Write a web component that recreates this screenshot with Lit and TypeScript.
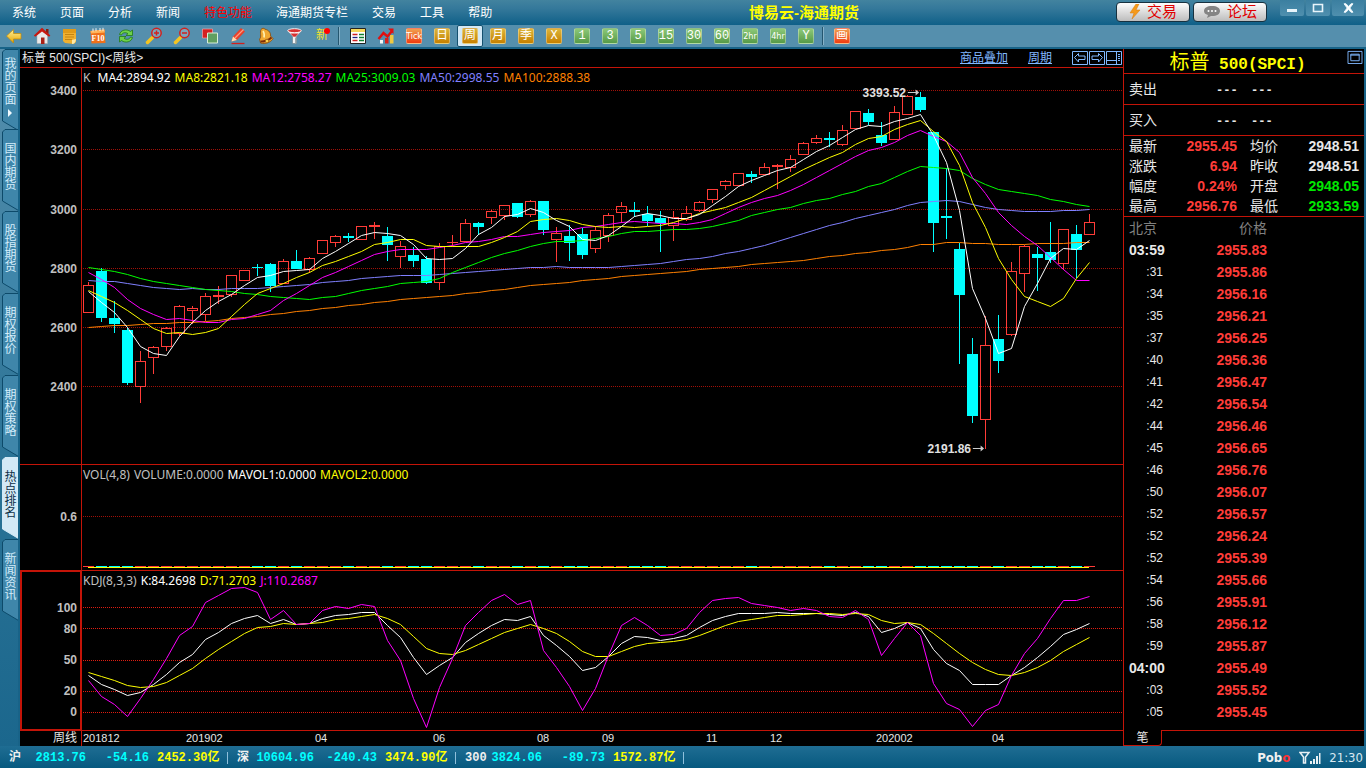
import { LitElement, html, svg, css, nothing } from "lit";
import type { TemplateResult } from "lit";
import { customElement, property } from "lit/decorators.js";
import { classMap } from "lit/directives/class-map.js";

/* ---------- data ---------- */

// [direction, body top, body bottom, high, low] in drawing units of the price pane
type Candle = [string, number, number, number, number];
const candles: Candle[] = [
  ["u", 285, 313, 282, 313], ["d", 271, 318, 268, 322], ["d", 318, 324, 301, 333], ["d", 330, 383, 328, 385],
  ["u", 361, 387, 351, 403], ["u", 347, 358, 346, 374], ["u", 328, 347, 327, 351], ["u", 306, 334, 305, 336],
  ["u", 308, 311, 306, 324], ["u", 296, 315, 293, 321], ["u", 295, 297, 286, 304], ["u", 275, 295, 275, 297],
  ["u", 270, 281, 270, 281], ["d", 267, 268, 264, 276], ["d", 264, 286, 263, 292], ["u", 261, 284, 259, 284],
  ["d", 261, 269, 250, 269], ["u", 258, 270, 257, 273], ["u", 240, 254, 240, 254], ["u", 236, 243, 235, 247],
  ["d", 236, 238, 233, 242], ["u", 226, 240, 226, 240], ["u", 225, 227, 222, 239], ["d", 236, 245, 227, 261],
  ["u", 246, 257, 241, 268], ["d", 255, 261, 247, 267], ["d", 259, 283, 256, 284], ["u", 246, 283, 243, 290],
  ["u", 242, 243, 235, 247], ["u", 223, 242, 219, 242], ["d", 223, 227, 222, 235], ["u", 211, 218, 210, 224],
  ["u", 205, 216, 205, 220], ["d", 203, 217, 203, 218], ["u", 201, 215, 200, 217], ["d", 201, 230, 201, 235],
  ["u", 233, 240, 227, 262], ["d", 236, 243, 225, 261], ["d", 234, 255, 228, 259], ["u", 230, 249, 226, 253],
  ["u", 215, 236, 213, 242], ["u", 206, 213, 202, 223], ["d", 210, 212, 202, 217], ["d", 214, 221, 206, 226],
  ["d", 218, 223, 211, 252], ["u", 217, 226, 211, 241], ["u", 213, 220, 206, 221], ["u", 202, 211, 201, 212],
  ["u", 189, 200, 189, 203], ["u", 181, 186, 180, 190], ["u", 173, 186, 173, 186], ["d", 174, 177, 171, 183],
  ["u", 167, 175, 163, 175], ["u", 165, 167, 164, 189], ["u", 159, 168, 155, 172], ["u", 143, 155, 142, 155],
  ["u", 138, 143, 135, 144], ["d", 138, 140, 132, 147], ["u", 130, 145, 125, 146], ["u", 111, 129, 111, 129],
  ["d", 113, 122, 109, 125], ["d", 135, 143, 122, 146], ["u", 112, 140, 106, 140], ["u", 96, 115, 95, 115],
  ["d", 97, 110, 92, 112], ["d", 132, 223, 132, 252], ["d", 216, 218, 168, 239], ["d", 249, 295, 243, 364],
  ["d", 354, 416, 338, 423], ["u", 345, 420, 316, 449], ["d", 339, 361, 315, 373], ["u", 271, 335, 262, 336],
  ["u", 246, 274, 245, 292], ["d", 254, 258, 247, 291], ["d", 252, 260, 222, 263], ["u", 229, 264, 229, 270],
  ["d", 234, 250, 225, 278], ["u", 222, 235, 214, 235],
];

const ma4 = [291, 302, 312, 327, 346, 353, 355, 336, 322, 310, 301, 294, 285, 277, 275, 271, 270, 269, 258, 251, 243, 235, 232, 233, 235, 244, 258, 259, 258, 248, 234, 227, 216, 214, 208, 212, 220, 226, 239, 240, 235, 226, 216, 213, 215, 218, 218, 214, 205, 196, 186, 180, 175, 170, 167, 159, 151, 145, 137, 129, 125, 126, 121, 118, 114, 135, 162, 210, 288, 318, 353, 348, 306, 283, 258, 248, 249, 240];
const ma8 = [290, 296, 302, 310, 319, 328, 333, 332, 334, 332, 328, 316, 304, 293, 288, 283, 277, 272, 265, 261, 256, 251, 244, 242, 239, 239, 245, 246, 246, 246, 246, 242, 237, 231, 221, 219, 218, 220, 224, 226, 227, 226, 227, 226, 225, 222, 218, 213, 210, 207, 202, 197, 190, 183, 176, 169, 163, 157, 152, 144, 138, 136, 129, 124, 120, 131, 141, 165, 202, 227, 258, 279, 296, 301, 306, 298, 278, 262];
const ma12 = [272, 279, 287, 299, 308, 314, 319, 318, 320, 322, 322, 319, 318, 314, 310, 300, 293, 285, 277, 272, 266, 260, 254, 251, 249, 249, 249, 247, 245, 242, 241, 239, 236, 236, 234, 232, 231, 230, 227, 226, 224, 222, 221, 222, 223, 223, 224, 222, 219, 213, 207, 202, 198, 195, 190, 184, 177, 170, 163, 156, 150, 147, 142, 135, 130, 136, 141, 152, 177, 193, 212, 225, 236, 245, 257, 269, 280, 280];
const ma25 = [267, 269, 271, 274, 278, 281, 283, 285, 287, 289, 290, 291, 293, 294, 296, 297, 298, 299, 297, 296, 293, 290, 288, 286, 283, 282, 281, 278, 272, 267, 262, 257, 253, 250, 246, 243, 241, 241, 240, 238, 236, 233, 231, 231, 230, 229, 229, 228, 226, 223, 220, 215, 212, 209, 207, 203, 200, 198, 194, 191, 186, 183, 177, 171, 166, 167, 168, 170, 178, 184, 189, 191, 193, 195, 199, 201, 204, 206];
const ma50 = [280, 281, 281, 283, 285, 287, 288, 289, 288, 289, 289, 288, 288, 288, 287, 286, 285, 284, 282, 281, 280, 278, 277, 276, 275, 275, 275, 274, 273, 272, 271, 270, 269, 268, 267, 267, 266, 267, 267, 267, 267, 266, 265, 264, 263, 261, 259, 258, 256, 253, 251, 248, 245, 241, 237, 233, 229, 225, 222, 218, 215, 212, 209, 205, 202, 201, 200, 201, 204, 207, 209, 210, 211, 211, 211, 210, 210, 209];
const ma100 = [327, 326, 325, 325, 324, 323, 323, 322, 322, 321, 320, 318, 317, 316, 314, 313, 311, 310, 308, 307, 305, 304, 302, 301, 299, 298, 297, 296, 295, 293, 292, 290, 289, 287, 285, 284, 283, 282, 280, 279, 278, 276, 275, 274, 273, 272, 271, 269, 268, 267, 266, 264, 263, 262, 261, 260, 258, 256, 255, 253, 252, 250, 249, 247, 244, 244, 242, 242, 243, 243, 244, 244, 244, 243, 243, 243, 242, 242];
const kLine = [675, 684, 689, 695, 692, 684, 674, 662, 654, 639, 632, 623, 618, 615, 623, 619, 624, 623, 618, 615, 614, 612, 612, 625, 637, 657, 674, 665, 657, 642, 633, 625, 619, 620, 616, 635, 645, 656, 670, 667, 656, 643, 636, 637, 640, 638, 635, 627, 620, 616, 613, 613, 613, 612, 613, 613, 613, 614, 615, 612, 616, 632, 628, 622, 628, 649, 663, 670, 684, 684, 684, 675, 667, 657, 646, 634, 629, 623];
const dLine = [672, 676, 680, 685, 687, 686, 682, 675, 668, 658, 649, 641, 633, 627, 626, 623, 624, 623, 622, 619, 618, 616, 614, 618, 624, 636, 648, 653, 654, 650, 644, 638, 632, 628, 624, 628, 633, 641, 651, 656, 656, 651, 646, 643, 642, 641, 639, 635, 630, 625, 621, 619, 617, 615, 615, 614, 613, 613, 614, 613, 614, 620, 623, 622, 624, 633, 643, 653, 662, 669, 674, 675, 672, 667, 660, 651, 644, 637];
const jLine = [680, 696, 704, 716, 698, 679, 658, 635, 626, 602, 595, 588, 587, 592, 619, 610, 624, 623, 610, 606, 608, 604, 606, 640, 660, 698, 727, 687, 658, 625, 612, 600, 594, 604, 600, 650, 667, 686, 710, 688, 655, 625, 617, 625, 635, 634, 628, 612, 600, 598, 597, 603, 605, 607, 610, 608, 610, 616, 617, 610, 619, 655, 638, 622, 635, 683, 703, 709, 726, 710, 704, 675, 653, 638, 618, 600, 600, 596];

const STEP = 13;
const WIDTH = 1041;
const cx = (i: number) => 6 + i * STEP;
const points = (ys: number[]) => ys.map((y, i) => `${cx(i) + 0.5},${y + 0.5}`).join(" ");

interface Tick { y: number; text: string }
interface Pane { top: number; height: number; ticks: Tick[] }
const pricePane: Pane = { top: 68, height: 396, ticks: [
  { y: 90, text: "3400" }, { y: 149, text: "3200" }, { y: 209, text: "3000" },
  { y: 268, text: "2800" }, { y: 327, text: "2600" }, { y: 386, text: "2400" }] };
const volPane: Pane = { top: 465, height: 105, ticks: [{ y: 516, text: "0.6" }] };
const kdjPane: Pane = { top: 571, height: 159, ticks: [
  { y: 607, text: "100" }, { y: 628, text: "80" }, { y: 660, text: "50" }, { y: 691, text: "20" }, { y: 712, text: "0" }] };

const months: [number, string][] = [[1, "201812"], [104, "201902"], [233, "04"], [351, "06"], [455, "08"],
  [520, "09"], [624, "11"], [688, "12"], [794, "202002"], [910, "04"]];

const ticks: [string, string][] = [
  ["03:59", "2955.83"], [":31", "2955.86"], [":34", "2956.16"], [":35", "2956.21"], [":37", "2956.25"],
  [":40", "2956.36"], [":41", "2956.47"], [":42", "2956.54"], [":44", "2956.46"], [":45", "2956.65"],
  [":46", "2956.76"], [":50", "2956.07"], [":52", "2956.57"], [":52", "2956.24"], [":52", "2955.39"],
  [":54", "2955.66"], [":56", "2955.91"], [":58", "2956.12"], [":59", "2955.87"], ["04:00", "2955.49"],
  [":03", "2955.52"], [":05", "2955.45"]];

/* ---------- shared styles ---------- */

const base = css`
  * { box-sizing: border-box; }
  button { appearance: none; border: 0; margin: 0; padding: 0; background: none; color: inherit; font: inherit; cursor: pointer; }
  a { color: inherit; text-decoration: none; }
  svg { display: block; }
`;

/* ---------- title bar ---------- */

@customElement("title-bar")
class TitleBar extends LitElement {
  static styles = [base, css`
    :host { display: flex; height: 25px; background: linear-gradient(#42839f, #34789a 35%, #0f6088);
      font: 12px/24px "Liberation Sans", "Noto Sans CJK SC", sans-serif; color: #fff; }
    .menu { display: flex; gap: 24px; padding: 1px 0 0 12px; }
    .hot { color: #f00; }
    .title { flex: 1; margin: 0; text-align: center; font: bold 15px/25px "Liberation Sans", "Noto Sans CJK SC", sans-serif; color: #ff0; }
    .actions { display: flex; gap: 3px; padding: 2px 13px 0 0; }
    .action { display: flex; align-items: center; justify-content: center; gap: 6px; width: 74px; height: 20px;
      border: 1px solid #17313f; border-radius: 4px; background: linear-gradient(#fdfdfd, #dcdcdc 50%, #bdbdbd);
      color: #e00000; font: 15px/18px "Liberation Sans", "Noto Sans CJK SC", sans-serif; }
    .window { display: flex; gap: 2px; padding-right: 2px; }
    .win { width: 24px; height: 16px; background: linear-gradient(#3b7fa0, #4f8fae); border-radius: 0 0 2px 2px; display: grid; place-items: center; }
    .close { width: 32px; }
  `];
  render() {
    const items = ["系统", "页面", "分析", "新闻", "特色功能", "海通期货专栏", "交易", "工具", "帮助"];
    return html`
      <nav class="menu">${items.map((t) => html`<button class=${t === "特色功能" ? "hot" : ""}>${t}</button>`)}</nav>
      <h1 class="title">博易云-海通期货</h1>
      <div class="actions">
        <button class="action">
          <svg width="12" height="16" viewBox="0 0 12 16"><path d="M7 0 1 9h4l-2 6 8-9H7l3-6z" fill="#f59a1b" stroke="#d9780a" stroke-width=".5"/></svg>交易</button>
        <button class="action">
          <svg width="18" height="14" viewBox="0 0 18 14"><path d="M9 1c5 0 8 2 8 5s-3 5-8 5l-1 0-4 2 1-3C2 9 1 8 1 6c0-3 3-5 8-5z" fill="#848484"/><g fill="#fff"><circle cx="5.5" cy="6" r="1"/><circle cx="9" cy="6" r="1"/><circle cx="12.5" cy="6" r="1"/></g></svg>论坛</button>
      </div>
      <div class="window">
        <button class="win" aria-label="最小化"><svg width="12" height="12" viewBox="0 0 12 12"><path d="M1 7h10v3H1z" fill="#e8f4fa"/></svg></button>
        <button class="win" aria-label="最大化"><svg width="12" height="10" viewBox="0 0 12 10"><path d="M1.5 1.5h9v7h-9z" fill="none" stroke="#e8f4fa" stroke-width="1.6"/></svg></button>
        <button class="win close" aria-label="关闭"><svg width="11" height="10" viewBox="0 0 11 10"><path d="M1 .8h2L5.500 3.500 8 .8h2L6.800 5 10 9.200H8L5.500 6.500 3 9.200H1L4.200 5z" fill="#fff" stroke="#e8f4fa"/></svg></button>
      </div>`;
  }
}

/* ---------- tool bar ---------- */

const icon = (body: TemplateResult) => html`<svg width="18" height="18" viewBox="0 0 18 18">${body}</svg>`;
const toolIcons: [string, TemplateResult][] = [
  ["后退", svg`<defs><linearGradient id="gold" x2="0" y2="1"><stop stop-color="#fff29a"/><stop offset="1" stop-color="#e8a400"/></linearGradient></defs>
    <path d="M1.500 9 8.500 2.500v4H16v5.500H8.500v4z" fill="url(#gold)" stroke="#c78a00" stroke-width=".7"/>`],
  ["首页", svg`<path d="M4 8v8.500h10.500V8L9 3z" fill="#e9e9e9" stroke="#a9a9a9" stroke-width=".5"/><path d="M13 2h2.500v5L13 5z" fill="#8a1c10"/><path d="M.8 8.500 9 .8l8.400 7.700-1.400 1.200L9 4.500 2.200 9.800z" fill="#c81810"/><path d="M8 10.500h3.500v6.500H8z" fill="#a82016"/>`],
  ["便签", svg`<path d="M2 2h13v13l-2 2-9-1-2-2z" fill="#f0b030"/><path d="M2 2h13v4H2z" fill="#e09a18"/><path d="M4 7.500h9M4 10h9M4 12.500h7" stroke="#c48410"/><path d="m15 12-4 1 0 4c2 0 4-2 4-5z" fill="#ffe9a8"/>`],
  ["资料", svg`<path d="M1.500 4 15.500 2.500l1 13.500-14 .5z" fill="#f0701a"/><path d="M1.500 4 15.500 2.500l.3 3L2 6.500z" fill="#ffb45a"/><path d="M4 1.500v3M7 1.200v3M11 1v3M14 .8v3" stroke="#fff" stroke-width=".9"/><text x="9" y="13.500" text-anchor="middle" font-size="8" font-weight="bold" font-family="Liberation Serif, serif" fill="#fff">F10</text>`],
  ["刷新", svg`<path d="M2.500 7.500C3.500 3 9.500 1.500 13.500 4.500L15.500 3v5.500H9l2-1.800C8.500 5 5.500 5.500 4.500 8z" fill="#6ed04a" stroke="#1f7a14" stroke-width=".8"/><path d="M15.500 10.500c-1 4.500-7 6-11 3L2.500 15V9.500H9l-2 1.800c2.500 1.700 5.500 1.200 6.500-1.300z" fill="#6ed04a" stroke="#1f7a14" stroke-width=".8"/>`],
  ["放大", svg`<path d="m2.500 15.500 5-5" stroke="#f5c521" stroke-width="3.500" stroke-linecap="round"/><circle cx="11.500" cy="6" r="4.700" fill="#7ba6bb" stroke="#d3201c" stroke-width="1.500"/><path d="M9 6h5M11.500 3.500v5" stroke="#d3201c" stroke-width="1.500"/>`],
  ["缩小", svg`<path d="m2.500 15.500 5-5" stroke="#f5c521" stroke-width="3.500" stroke-linecap="round"/><circle cx="11.500" cy="6" r="4.700" fill="#7ba6bb" stroke="#d3201c" stroke-width="1.500"/><path d="M9 6h5" stroke="#d3201c" stroke-width="1.500"/>`],
  ["叠加", svg`<path d="M1.500 2h10v9h-10z" fill="#d42020" stroke="#f3a0a0" stroke-width=".7"/><path d="M6.500 6h10v10h-10z" fill="#5f9f60" stroke="#d8eed8"/>`],
  ["画线", svg`<path d="m2.500 14.500 1.500-5L12 1l4 3.500-8 8.500z" fill="#e8402a"/><path d="m6 11 8.500-8.500" stroke="#ff9a80" stroke-width="1.200"/><path d="m2.500 14.500 1.500-5 4 3.500z" fill="#ffe0b0"/><path d="M2.500 16.500h13" stroke="#d3201c" stroke-width="1.300"/>`],
  ["预警", svg`<path d="M4 2.500C5 1 7 .8 8 2.200c4 .8 6 4 5.500 6.800l2.500 2.500c-1 3-8 6.500-12.500 4.500L2.500 12C5 10 2.500 6 4 2.500z" fill="#f0a832" stroke="#8a4a08" stroke-width=".8"/><path d="M3.500 14.500c3 .5 8-1 11-4" stroke="#7a2c08" stroke-width="2" fill="none"/><circle cx="10" cy="14" r="1.800" fill="#ffd34d" stroke="#8a4a08" stroke-width=".6"/><path d="M6 4c1.500 2 1.500 4 1 6.500" stroke="#fff0b0" stroke-width="1.600" fill="none"/>`],
  ["筛选", svg`<path d="M2.500 4 7.500 9.500V16.500h4V9.500L16.500 4z" fill="#f2f2f2" stroke="#6a7a84" stroke-width=".6"/><ellipse cx="9.500" cy="3.700" rx="6.800" ry="2" fill="#d83030" stroke="#fff" stroke-width=".9"/><path d="m5.500 6.500 3 3.200h2L13.500 6.500z" fill="#d83030"/><path d="M10.500 10.500v6" stroke="#9aa" stroke-width="1"/>`],
];

@customElement("tool-bar")
class ToolBar extends LitElement {
  static styles = [base, css`
    :host { display: flex; height: 22px; background: #558fad; font: 12px/16px "Liberation Mono", "Noto Sans CJK SC", monospace; color: #fff; }
    .cell { display: grid; place-items: center; width: 28px; height: 22px; }
    .new { color: #f4e32a; position: relative; line-height: 22px; }
    .dot { position: absolute; top: 3px; right: 6px; width: 6px; height: 6px; border-radius: 50%; background: #f00; }
    .sep { width: 2px; height: 18px; margin: 2px 4px 0 2px; border-left: 1px solid #24566f; border-right: 1px solid #86b2c8; }
    .chip { width: 16px; height: 16px; border-radius: 2px; border: 1px solid #ffffff55; line-height: 14px; text-align: center; display: flex; justify-content: center; }
    .gold { background: linear-gradient(#dcb53a, #c68000); }
    .green { background: linear-gradient(#8cc878, #569a48); }
    .red { background: linear-gradient(#f0a050, #f03c10); }
    .tiny { font: 9px/14px "DejaVu Sans Condensed", sans-serif; }
    .on { width: 26px; margin: 0 1px; border: 1px solid #14506e; border-radius: 2px; background: #d3e9f6; }
  `];
  chip(text: string, tone: string) {
    return html`<button class=${classMap({ cell: true, on: text === "周" })}><span class=${classMap({ chip: true, [tone]: true, tiny: text.length > 2 })}>${text}</span></button>`;
  }
  render() {
    return html`
      ${toolIcons.map(([label, body]) => html`<button class="cell" aria-label=${label}>${icon(body)}</button>`)}
      <button class="cell new">新<span class="dot"></span></button>
      <span class="sep"></span>
      <button class="cell" aria-label="报价">${icon(svg`<path d="M1.500 1.500h15v15h-15z" fill="#fff" stroke="#222"/><path d="M2 2h14v3H2z" fill="#f5d75a"/><path d="M3.500 7.500h5M3.500 13.500h5" stroke="#d02020" stroke-width="1.300"/><path d="M3.500 10.500h5" stroke="#202080" stroke-width="1.300"/><path d="M10 7.500h5M10 10.500h5M10 13.500h5" stroke="#108030" stroke-width="1.300"/>`)}</button>
      <button class="cell" aria-label="走势">${icon(svg`<path d="M3 13h3v3.500H3z" fill="#f4f4f4"/><path d="M8 11h3.500v5.500H8z" fill="#d82018"/><path d="M13 8h3.500v8.500H13z" fill="#f0c840"/><path d="m1.500 12 5-6 4 3.500L15 4" stroke="#e01010" stroke-width="2.400" fill="none"/><path d="M11 1.500h5.500V7z" fill="#e01010"/>`)}</button>
      ${this.chip("Tick", "red")}
      ${["日", "周", "月", "季", "X"].map((t) => this.chip(t, "gold"))}
      ${["1", "3", "5", "15", "30", "60", "2hr", "4hr", "Y"].map((t) => this.chip(t, "green"))}
      <span class="sep"></span>
      ${this.chip("画", "red")}`;
  }
}

/* ---------- page tabs on the left ---------- */

@customElement("page-tabs")
class PageTabs extends LitElement {
  static styles = [base, css`
    :host { display: block; background: linear-gradient(#5690ae, #2b7396 60%, #1b678d); border-right: 2px solid #186388; padding-left: 2px;
      font: 12px/16px "Noto Sans CJK SC", sans-serif; color: #d4edfb; }
    .tab { display: grid; width: 16px; height: 82px; }
    .first { height: 80px; }
    .shape { grid-area: 1 / 1; width: 16px; height: 82px; }
    .face { fill: #3f86aa; stroke: #0d4a6a; }
    .label { grid-area: 1 / 1; padding-top: 13px; writing-mode: vertical-rl; line-height: 16px; text-align: left; z-index: 1; }
    .first .label { padding-top: 8px; }
    .arrow { display: inline-block; margin-top: 4px; }
    .on .face { fill: #d3e9f6; stroke: #d3e9f6; }
    .on { color: #0d3048; }
  `];
  render() {
    const names = ["我的页面", "国内期货", "股指期货", "期权报价", "期权策略", "热点排名", "新闻资讯"];
    return html`${names.map((n, i) => html`
      <button class=${classMap({ tab: true, first: i === 0, on: n === "热点排名" })}>
        <svg class="shape" viewBox="0 0 16 82"><path class="face" d="M16.500.5H3L.5 3v69l16 9.500z"/></svg>
        <span class="label">${n}${i === 0 ? html`<svg class="arrow" width="6" height="8" viewBox="0 0 6 8"><path d="M1 0v8l4-4z" fill="#f0faff"/></svg>` : nothing}</span>
      </button>`)}`;
  }
}

/* ---------- chart ---------- */

@customElement("chart-pane")
class ChartPane extends LitElement {
  @property({ attribute: false }) pane: Pane = pricePane;
  @property({ type: Boolean, reflect: true }) selected = false;
  @property({ attribute: false }) plot: unknown = nothing;
  @property({ attribute: false }) legend: [string, string][] = [];
  @property({ type: Boolean, reflect: true }) bright = false;

  static styles = [base, css`
    :host { display: grid; grid-template-columns: 62px minmax(0, 1fr); min-height: 0; border-bottom: 1px solid #c41408; }
    .axis { position: relative; border-right: 1px solid #c41408; font: bold 12px/16px "Liberation Sans", sans-serif; color: #c0c0c0; }
    :host([selected]) .axis { border: 2px solid #c41408; margin: -1px 0; }
    .tick { position: absolute; right: 4px; transform: translateY(-50%); }
    :host([selected]) .tick { right: 3px; }
    .plot { display: grid; min-height: 0; min-width: 0; }
    .canvas { grid-area: 1 / 1; width: 100%; height: 100%; min-height: 0; position: relative; }
    .drawing { position: absolute; inset: 0; width: 100%; height: 100%; }
    .legend { grid-area: 1 / 1; z-index: 1; display: flex; gap: 4px; align-self: start; padding: 1px 0 0 1px; white-space: nowrap;
      font: 12px/17px "Noto Sans", sans-serif; }
    .grid { stroke: #a01008; stroke-dasharray: 1 1; shape-rendering: crispEdges; }
    :host([bright]) .grid { stroke: #e01c10; }
    .up { fill: none; stroke: #ff3c38; }
    .upf { fill: #ff3c38; }
    .dn { fill: #0ff; }
    .crisp { shape-rendering: crispEdges; }
    .line { fill: none; stroke-width: 1; }
    .note { position: absolute; display: flex; align-items: center; gap: 2px; transform: translate(-100%, -50%); font: bold 12px/16px "Liberation Sans", sans-serif; color: #e0e0e0; }
  `];
  render() {
    const { top, height, ticks: marks } = this.pane;
    const pct = (y: number) => `${((y + 0.5 - top) / height) * 100}%`;
    return html`
      <div class="axis">${marks.map((m) => html`<span class="tick" style="top:${pct(m.y)}">${m.text}</span>`)}</div>
      <div class="plot">
        <div class="canvas">
          <svg class="drawing" viewBox="0 ${top} ${WIDTH} ${height}" preserveAspectRatio="none">
            ${marks.map((m) => svg`<line class="grid" x1="1" x2=${WIDTH} y1=${m.y + 0.5} y2=${m.y + 0.5}/>`)}
            ${this.plot}
          </svg>
          ${this.pane === pricePane ? [["3393.52", 838, 92], ["2191.86", 903, 448]].map(([t, x, y]) => html`
            <span class="note" style="left:${(Number(x) / WIDTH) * 100}%;top:${pct(Number(y))}">${t}<svg width="12" height="7" viewBox="0 0 12 7"><path d="M0 3.500h10" stroke="#ccc"/><path d="M8 .5 11.500 3.500 8 6.500z" fill="#ccc"/></svg></span>`) : nothing}
        </div>
        <div class="legend">${this.legend.map(([t, c]) => html`<span style="color:${c}">${t}</span>`)}</div>
      </div>`;
  }
}

const line = (ys: number[], color: string) => svg`<polyline class="line" points=${points(ys)} stroke=${color}/>`;

const candle = ([dir, top, bottom, high, low]: Candle, i: number) => {
  const x = cx(i);
  const fill = dir === "u" ? "upf" : "dn";
  const hollow = dir === "u" && bottom - top > 2;
  return svg`<g class="crisp">
    ${high < top ? svg`<rect class=${fill} x=${x} y=${high} width="1" height=${top - high}/>` : nothing}
    ${low > bottom ? svg`<rect class=${fill} x=${x} y=${bottom} width="1" height=${low - bottom}/>` : nothing}
    ${hollow
      ? svg`<rect class="up" x=${x - 4.5} y=${top + 0.5} width="10" height=${bottom - top - 1}/>`
      : svg`<rect class=${fill} x=${x - 5} y=${top} width="11" height=${bottom - top}/>`}
  </g>`;
};

@customElement("chart-area")
class ChartArea extends LitElement {
  static styles = [base, css`
    :host { display: grid; grid-template-rows: 19px 397fr 106fr 160fr 15px; min-height: 0; background: #000; border-right: 1px solid #c41408;
      font: 11px/18px "Liberation Sans", "Noto Sans CJK SC", sans-serif; color: #e8e8e8; }
    .head { display: flex; align-items: center; border-bottom: 1px solid #c41408; padding-left: 2px; font-size: 12px; }
    .name { flex: 1; }
    .link { color: #80b8ff; text-decoration: underline; margin-right: 20px; }
    .tools { display: flex; gap: 1px; padding-right: 1px; }
    .time { display: grid; grid-template-columns: 62px 1fr; line-height: 15px; }
    .period { border-right: 1px solid #c41408; padding-right: 4px; text-align: right; font-size: 12px; }
    .scale { position: relative; }
    .month { position: absolute; }
  `];
  render() {
    const pricePlot = svg`${candles.map(candle)}
      ${line(ma100, "#ff8000")}${line(ma50, "#8080ff")}${line(ma25, "#00ff00")}${line(ma12, "#ff00ff")}${line(ma8, "#ffff00")}${line(ma4, "#ffffff")}`;
    const volPlot = svg`<g class="crisp">${candles.map(([d], i) => svg`<rect class=${d === "u" ? "upf" : "dn"} x=${cx(i) - 5} y="566" width="11" height="1"/>`)}
      <rect x=${cx(0)} y="567" width=${STEP * 77} height="1" fill="#ffff00"/></g>`;
    const kdjPlot = svg`${line(kLine, "#ffffff")}${line(dLine, "#ffff00")}${line(jLine, "#ff00ff")}`;
    return html`
      <div class="head">
        <span class="name">标普 500(SPCI)&lt;周线&gt;</span>
        <a class="link" href="#overlay">商品叠加</a><a class="link" href="#period">周期</a>
        <span class="tools">
          <svg width="16" height="14" viewBox="0 0 16 14" fill="none" stroke="#80b8ff"><path d="M.5.500h15v13H.5zM2.500 6.500l4-4v2.500h6.500v3.500H6.500v2.500z"/></svg>
          <svg width="16" height="14" viewBox="0 0 16 14" fill="none" stroke="#80b8ff"><path d="M.5.500h15v13H.5zM13.500 6.500l-4-4v2.500H3v3.500h6.500v2.500z"/></svg>
          <svg width="16" height="14" viewBox="0 0 16 14" fill="none" stroke="#80b8ff"><path d="M.5.500h15v13H.5zM10.500 1v12M1 9.500h9M12 3.500h2M12 5.500h2M12 7.500h2M12 9.500h2"/></svg>
        </span>
      </div>
      <chart-pane .pane=${pricePane} .plot=${pricePlot} .legend=${[["K\u00a0", "#c0c0c0"], ["MA4:2894.92", "#fff"], ["MA8:2821.18", "#ff0"], ["MA12:2758.27", "#f0f"], ["MA25:3009.03", "#0f0"], ["MA50:2998.55", "#8080ff"], ["MA100:2888.38", "#ff8000"]]}></chart-pane>
      <chart-pane .pane=${volPane} .plot=${volPlot} .legend=${[["VOL(4,8)", "#c0c0c0"], ["VOLUME:0.0000", "#c0c0c0"], ["MAVOL1:0.0000", "#fff"], ["MAVOL2:0.0000", "#ff0"]]}></chart-pane>
      <chart-pane selected bright .pane=${kdjPane} .plot=${kdjPlot} .legend=${[["KDJ(8,3,3)", "#c0c0c0"], ["K:84.2698", "#fff"], ["D:71.2703", "#ff0"], ["J:110.2687", "#f0f"]]}></chart-pane>
      <div class="time">
        <span class="period">周线</span>
        <div class="scale">${months.map(([x, t]) => html`<span class="month" style="left:${(x / WIDTH) * 100}%">${t}</span>`)}</div>
      </div>`;
  }
}

/* ---------- quote panel ---------- */

@customElement("quote-panel")
class QuotePanel extends LitElement {
  static styles = [base, css`
    :host { display: flex; flex-direction: column; min-height: 0; background: #000; border-right: 2px solid #186388; color: #e8e8e8;
      font: 14px/20px "Liberation Sans", "Noto Sans CJK SC", sans-serif; }
    .title { display: grid; grid-template-columns: 1fr 16px; height: 25px; padding-right: 1px; border-bottom: 1px solid #c41408; }
    .name { margin: 0; padding-left: 4px; text-align: center; color: #ff0; white-space: nowrap; font: 20px/24px "Noto Sans CJK SC", sans-serif; }
    .code { font: bold 16px/24px "Liberation Mono", monospace; white-space: pre; }
    .box { padding: 1px 0 0; }
    .ask { display: grid; grid-template-columns: 87px 35px 1fr; height: 31px; padding-left: 5px; line-height: 30px; border-bottom: 1px solid #c41408; }
    .dash { font: bold 12px/34px "Liberation Mono", monospace; }
    .stats { display: grid; grid-template-columns: 40px 68px 13px 40px 1fr; padding: 0 5px 0 5px; border-bottom: 1px solid #c41408; margin: 0; }
    .key { grid-column: 1; }
    .key2 { grid-column: 4; }
    .val { margin: 0; text-align: right; font-weight: bold; }
    .up { color: #ff3c38; }
    .down { color: #00e800; }
    .body { flex: 1; min-height: 0; overflow: hidden; padding-left: 5px; }
    .deals { border-collapse: collapse; table-layout: fixed; width: 138px; line-height: 22px; }
    .deals th { font-weight: normal; color: #808080; padding: 0; height: 22px; }
    .deals td { padding: 0; height: 22px; }
    .deals .when { width: 37px; text-align: left; }
    .deals .time { font-size: 12px; text-align: right; padding-right: 3px; }
    .deals .full { font-weight: bold; font-size: 14px; text-align: left; padding: 0; }
    .deals .price { text-align: right; font-weight: bold; color: #ff3c38; }
    .deals .right { text-align: right; }
    .foot { display: flex; height: 16px; font-size: 12px; line-height: 14px; }
    .tab { width: 38px; border: 1px solid #c41408; border-width: 0 1px 1px 0; border-radius: 0 0 4px 0; text-align: center; }
    .rest { flex: 1; border-top: 1px solid #c41408; }
  `];
  render() {
    const rows: [string, string, string, string, string][] = [
      ["最新", "2955.45", "均价", "2948.51", ""], ["涨跌", "6.94", "昨收", "2948.51", ""],
      ["幅度", "0.24%", "开盘", "2948.05", "down"], ["最高", "2956.76", "最低", "2933.59", "down"]];
    return html`
      <header class="title"><h2 class="name">标普<span class="code"> 500(SPCI)</span></h2>
        <svg class="box" width="16" height="15" viewBox="0 0 16 15" fill="none" stroke="#80b8ff"><path d="M.5 1.500h15v13H.5zM3.500 4.500h9v7h-9zM3 5.500h10"/></svg></header>
      ${["卖出", "买入"].map((t) => html`<div class="ask"><span>${t}</span><span class="dash">---</span><span class="dash">---</span></div>`)}
      <dl class="stats">${rows.map(([a, b, c, d, tone]) => html`<dt class="key">${a}</dt><dd class="val up">${b}</dd><dt class="key2">${c}</dt><dd class="val ${tone}">${d}</dd>`)}</dl>
      <div class="body">
        <table class="deals">
          <thead><tr><th class="when">北京</th><th class="right">价格</th></tr></thead>
          <tbody>${ticks.map(([t, p]) => html`<tr><td class=${classMap({ time: true, full: t.length > 3 })}>${t}</td><td class="price">${p}</td></tr>`)}</tbody>
        </table>
      </div>
      <div class="foot"><button class="tab">笔</button><span class="rest"></span></div>`;
  }
}

/* ---------- status bar ---------- */

@customElement("status-bar")
class StatusBar extends LitElement {
  static styles = [base, css`
    :host { display: flex; align-items: center; height: 22px; padding: 2px 3px 0 9px; background: linear-gradient(#1f6d93, #07597f);
      font: bold 12px/20px "Liberation Mono", "Noto Sans CJK SC", monospace; color: #f0f0f0; white-space: nowrap; }
    .index { display: grid; grid-template-columns: 21px 56px 63px 8px 70px 10px; }
    .num { display: flex; justify-content: flex-end; color: #0ff; }
    .sum { grid-column: 5; color: #ff0; }
    .bar { width: 1px; height: 12px; align-self: center; background: #8fc0dc; }
    .brand { margin-left: auto; font: bold 13px/20px "DejaVu Sans Condensed", sans-serif; }
    .o { color: #f33; }
    .signal { margin: 0 8px 0 9px; }
    .clock { font: 13px/20px "DejaVu Sans Condensed", sans-serif; color: #d8e8f0; }
  `];
  render() {
    const list = [["沪", "2813.76", "-54.16", "2452.30亿"], ["深", "10604.96", "-240.43", "3474.90亿"], ["300", "3824.06", "-89.73", "1572.87亿"]];
    return html`
      ${list.map(([n, p, d, s]) => html`<span class="index"><span>${n}</span><span class="num">${p}</span><span class="num">${d}</span><span class="sum">${s}</span><span class="bar"></span></span>`)}
      <span class="brand">Pob<span class="o">o</span></span>
      <svg class="signal" width="22" height="14" viewBox="0 0 22 14"><path d="M1 1.500h9L6.500 6v6h-2V6z" fill="none" stroke="#e8f0f4" stroke-width="1.500"/><path d="M11 10h2v3h-2zM14 8h2v5h-2zM17 5h2v8h-2zM20 2h1.500v11H20z" fill="#e8f0f4"/></svg>
      <time class="clock">21:30</time>`;
  }
}

/* ---------- shell ---------- */

@customElement("app-root")
class AppRoot extends LitElement {
  static styles = [base, css`
    :host { display: grid; grid-template-rows: auto auto minmax(0, 1fr) auto; height: 100vh; overflow: hidden; }
    .main { display: grid; grid-template-columns: 20px minmax(0, 1fr) 242px; grid-template-rows: minmax(0, 1fr); border-top: 2px solid #186388; min-height: 0; }
  `];
  render() {
    return html`<title-bar></title-bar><tool-bar></tool-bar>
      <main class="main"><page-tabs></page-tabs><chart-area></chart-area><quote-panel></quote-panel></main>
      <status-bar></status-bar>`;
  }
}
